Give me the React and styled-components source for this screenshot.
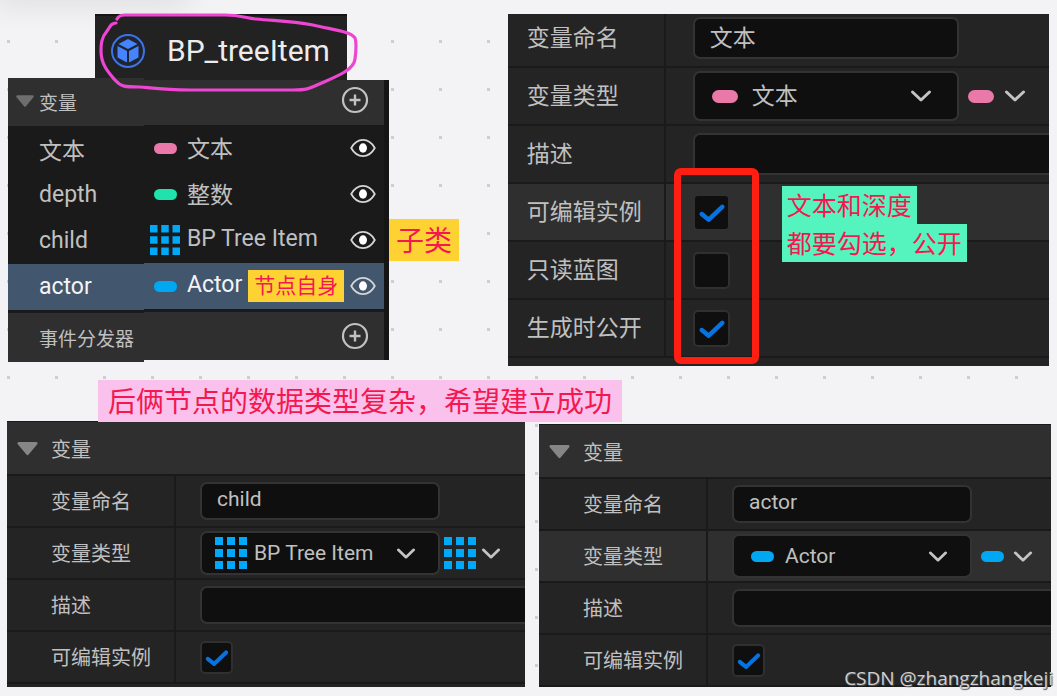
import React from "react";
import styled, { createGlobalStyle } from "styled-components";

const variables = [
  { name: "文本", type: "文本", color: "#e879a8" },
  { name: "depth", type: "整数", color: "#20e2ad" },
  { name: "child", type: "BP Tree Item", array: true },
  { name: "actor", type: "Actor", color: "#00a8f4", note: "节点自身", selected: true },
];

function Pin({ color, array, large }) {
  if (array) {
    const size = large ? 32 : 30;
    return (
      <svg width={size} height={size} viewBox="0 0 32 32" fill="#00a8f8">
        {[0, 12, 24].map((y) =>
          [0, 12, 24].map((x) => (
            <rect key={`${x}-${y}`} x={x} y={y} width="8" height="8" />
          ))
        )}
      </svg>
    );
  }
  return <Pill $color={color} $large={large} />;
}

function Chevron({ large }) {
  return (
    <svg width={large ? 22 : 20} height={large ? 14 : 13} viewBox="0 0 22 14" fill="none">
      <path
        d="M2.5 3 L11 11 L19.5 3"
        stroke="#c4c4c4"
        strokeWidth="3"
        strokeLinecap="round"
        strokeLinejoin="round"
      />
    </svg>
  );
}

function Triangle({ size, color }) {
  return (
    <svg width={size} height={size} viewBox="0 0 20 20">
      <path
        d="M2.5 5.5 H17.5 L10 14.5 Z"
        fill={color}
        stroke={color}
        strokeWidth="2.5"
        strokeLinejoin="round"
      />
    </svg>
  );
}

function Eye() {
  return (
    <svg width="26" height="20" viewBox="0 0 26 20" fill="none">
      <path
        d="M1.2 10 C4 5 8 1.9 13 1.9 C18 1.9 22 5 24.8 10 C22 15 18 18.1 13 18.1 C8 18.1 4 15 1.2 10 Z"
        stroke="#d6d6d6"
        strokeWidth="1.8"
        strokeLinejoin="round"
      />
      <ellipse cx="13" cy="10" rx="4" ry="4.7" fill="#fff" />
    </svg>
  );
}

function Plus() {
  return (
    <svg width="28" height="28" viewBox="0 0 28 28" fill="none" stroke="#c2c2c2">
      <circle cx="14" cy="14" r="12" strokeWidth="2.2" />
      <path d="M14 8.5 V19.5 M8.5 14 H19.5" strokeWidth="2.4" />
    </svg>
  );
}

function Cube() {
  return (
    <svg width="36" height="36" viewBox="0 0 36 36">
      <circle cx="18" cy="18" r="16" fill="#1f2430" stroke="#3c74e8" strokeWidth="2" />
      <path d="M18 6 L27.5 11 L18 16 L8.5 11 Z" fill="#4583ff" />
      <path d="M7.5 13 L17 18 V29.5 L7.5 24.5 Z" fill="#4583ff" />
      <path d="M28.5 13 L19 18 V29.5 L28.5 24.5 Z" fill="#4583ff" />
    </svg>
  );
}

function CheckBox({ id, checked, large }) {
  return (
    <Check $large={large}>
      <input id={id} type="checkbox" defaultChecked={checked} />
      <svg viewBox="0 0 36 36" fill="none">
        <path
          d="M8.5 19.5 L15.3 25 L28.5 12.5"
          stroke="#0673e2"
          strokeWidth="4.4"
          strokeLinecap="round"
          strokeLinejoin="round"
        />
      </svg>
    </Check>
  );
}

function Details({ id, large, name, type, pin, highlight, extra, tail, children }) {
  const checks = [["可编辑实例", true], ...(extra || [])];
  const size = { $large: large };
  return (
    <>
      <Row {...size} $first={large}>
        <Label {...size} htmlFor={`${id}-name`}>变量命名</Label>
        <Cell {...size}>
          <TextInput {...size} id={`${id}-name`} defaultValue={name} />
        </Cell>
      </Row>
      <Row {...size} $active={highlight === "type"}>
        <Label {...size} htmlFor={`${id}-type`}>变量类型</Label>
        <Cell {...size}>
          <SelectBox {...size} $array={pin.array}>
            <Pin {...pin} large={large || pin.array} />
            <select id={`${id}-type`} defaultValue={type}>
              <option>{type}</option>
            </select>
            <Chevron large={large} />
          </SelectBox>
          <KindButton {...size} $array={pin.array} aria-label="容器类型">
            <Pin {...pin} large={large || pin.array} />
            <Chevron large={large} />
          </KindButton>
        </Cell>
      </Row>
      <Row {...size}>
        <Label {...size} htmlFor={`${id}-desc`}>描述</Label>
        <Cell {...size}>
          <TextInput {...size} $wide id={`${id}-desc`} />
        </Cell>
      </Row>
      {checks.map(([label, on], i) => (
        <Row key={label} {...size} $active={highlight === "edit" && i === 0}>
          <Label {...size} htmlFor={`${id}-check-${i}`}>{label}</Label>
          <Cell {...size}>
            <CheckBox id={`${id}-check-${i}`} checked={on} large={large} />
          </Cell>
        </Row>
      ))}
      <Tail $height={tail} />
      {children}
    </>
  );
}

function App() {
  return (
    <Board>
      <GlobalStyle />
      <TopRow>
        <Blueprint>
          <Tab>
            <Cube />
            <span>BP_treeItem</span>
            <Lasso viewBox="0 0 270 90" fill="none">
              <path
                d="M20 10 C15 10 14 14 11 18 C5 25 5 32 5 38 C5 52 13 60 19 67 C25 74 29 74 44 74 C65 76 72 77 95 77 L197 77 C213 77 214 75 228 69 C244 62 258 56 259 46 C260 38 261 30 259 25 C254 18 238 17 217 12 C195 8 181 8 160 6 C149 5 145 2 129 2 L29 2 C24 2 22 4 21 6"
                stroke="#ee45d2"
                strokeWidth="3.2"
                strokeLinecap="round"
              />
            </Lasso>
          </Tab>
          <Variables>
            <Names>
              <NamesHeader>
                <Triangle size={20} color="#6e6e6e" />
                <span>变量</span>
              </NamesHeader>
              {variables.map((v) => (
                <NameRow key={v.name} $selected={v.selected}>{v.name}</NameRow>
              ))}
              <NamesFooter>事件分发器</NamesFooter>
            </Names>
            <Types>
              <TypesBar>
                <IconButton aria-label="添加变量"><Plus /></IconButton>
              </TypesBar>
              {variables.map((v) => (
                <TypeRow key={v.name} $selected={v.selected}>
                  <PinSlot><Pin color={v.color} array={v.array} /></PinSlot>
                  <TypeName>{v.type}</TypeName>
                  {v.note && <SelfNote>{v.note}</SelfNote>}
                  <IconButton aria-label="公开"><Eye /></IconButton>
                </TypeRow>
              ))}
              <TypesBar $footer>
                <IconButton aria-label="添加事件分发器"><Plus /></IconButton>
              </TypesBar>
            </Types>
            <ChildNote>子类</ChildNote>
          </Variables>
        </Blueprint>
        <TextPanel>
          <Details
            id="text"
            large
            name="文本"
            type="文本"
            pin={{ color: "#e879a8" }}
            highlight="edit"
            extra={[["只读蓝图", false], ["生成时公开", true]]}
            tail={10}
          >
            <RedFrame />
            <GreenNote>
              <span>文本和深度</span>
              <span>都要勾选，公开</span>
            </GreenNote>
          </Details>
        </TextPanel>
      </TopRow>
      <PinkNote>后俩节点的数据类型复杂，希望建立成功</PinkNote>
      <BottomRow>
        <Panel $grow={518}>
          <PanelHeader><Triangle size={23} color="#868686" />变量</PanelHeader>
          <Details
            id="child"
            name="child"
            type="BP Tree Item"
            pin={{ array: true }}
            tail={5}
          />
        </Panel>
        <Panel $grow={512}>
          <PanelHeader><Triangle size={23} color="#868686" />变量</PanelHeader>
          <Details
            id="actor"
            name="actor"
            type="Actor"
            pin={{ color: "#00a8f4" }}
            highlight="type"
            tail={2}
          />
        </Panel>
      </BottomRow>
      <Watermark>CSDN @zhangzhangkeji</Watermark>
    </Board>
  );
}

export default App;

const GlobalStyle = createGlobalStyle`
  * {
    box-sizing: border-box;
  }
  body {
    margin: 0;
  }
  body, input, select, button {
    font-family: Roboto, "Noto Sans CJK SC", sans-serif;
  }
  svg {
    display: block;
    flex: none;
  }
  button {
    display: flex;
    align-items: center;
    padding: 0;
    border: none;
    background: none;
    cursor: pointer;
  }
`;

const Board = styled.main`
  position: relative;
  overflow: hidden;
  min-height: 100vh;
  padding: 14px 6px 9px 7px;
  color: #c0c0c0;
  background-color: #f3f3f5;
  background-image: conic-gradient(from 270deg at 3px 3px, #cfcfd1 90deg, transparent 0);
  background-size: 48px 48px;
  background-position: 7px 40px;
  &::before {
    content: "";
    position: absolute;
    top: -12px;
    left: 0;
    width: 184px;
    height: 12px;
    box-shadow: 0 0 28px 6px rgb(0 0 0 / 9%);
  }
`;

const TopRow = styled.div`
  display: flex;
  align-items: flex-start;
  justify-content: space-between;
  padding: 0 2px 0 1px;
`;

const Blueprint = styled.section`
  width: 381px;
`;

const Tab = styled.div`
  position: relative;
  display: flex;
  align-items: center;
  width: 252px;
  height: 66px;
  margin: 0 0 -2px 87px;
  padding: 6px 0 0 15px;
  gap: 21px;
  background: #222;
  border-top: 2px solid #151515;
  color: #ececec;
  font-size: 30px;
  line-height: 36px;
`;

const Lasso = styled.svg`
  position: absolute;
  z-index: 2;
  top: -3px;
  left: 1px;
  width: 270px;
  height: 90px;
  pointer-events: none;
`;

const Variables = styled.div`
  position: relative;
  display: flex;
  align-items: flex-start;
  font-size: 23px;
`;

const Names = styled.div`
  width: 136px;
  background: #1a1a1a;
`;

const NamesHeader = styled.div`
  display: flex;
  align-items: center;
  gap: 4px;
  height: 48px;
  padding: 0 0 2px 7px;
  background: #2f2f2f;
  font-size: 19px;
`;

const NameRow = styled.div`
  display: flex;
  align-items: center;
  height: 46px;
  padding: 0 0 1px 31px;
  background: ${(p) => (p.$selected ? "#42566e" : "#1a1a1a")};
  color: ${(p) => (p.$selected ? "#f4f4f4" : "#c0c0c0")};
`;

const NamesFooter = styled.div`
  display: flex;
  align-items: center;
  height: 49px;
  margin-top: 3px;
  padding-left: 31px;
  background: #2f2f2f;
  font-size: 19px;
  white-space: nowrap;
`;

const Types = styled.div`
  flex: 1;
  margin-top: 2px;
  background: #1a1a1a;
  border-right: 5px solid #151515;
`;

const TypesBar = styled.div`
  display: flex;
  align-items: center;
  justify-content: flex-end;
  height: ${(p) => (p.$footer ? 48 : 45)}px;
  margin-top: ${(p) => (p.$footer ? 3 : 0)}px;
  padding: 0 15px ${(p) => (p.$footer ? 0 : 5)}px 0;
  background: #2f2f2f;
`;

const TypeRow = styled.div`
  display: flex;
  align-items: center;
  height: 46px;
  padding: 0 8px 0 6px;
  background: ${(p) => (p.$selected ? "#42566e" : "#1a1a1a")};
  color: ${(p) => (p.$selected ? "#f4f4f4" : "#c0c0c0")};
  white-space: nowrap;
  button {
    margin-left: auto;
  }
`;

const TypeName = styled.span`
  padding-bottom: 3px;
`;

const PinSlot = styled.span`
  display: flex;
  justify-content: center;
  width: 30px;
  margin-right: 7px;
`;

const Pill = styled.span`
  flex: none;
  width: ${(p) => (p.$large ? 26 : 23)}px;
  height: ${(p) => (p.$large ? 13 : 11)}px;
  border-radius: 7px;
  background: ${(p) => p.$color};
`;

const IconButton = styled.button`
  flex: none;
`;

const SelfNote = styled.span`
  height: 32px;
  margin-left: 6px;
  padding: 0 6px;
  background: #ffd233;
  color: #f5174f;
  font-size: 21px;
  line-height: 32px;
`;

const ChildNote = styled.div`
  position: absolute;
  left: 100%;
  top: 141px;
  width: 70px;
  height: 42px;
  background: #ffd233;
  color: #f5174f;
  font-size: 28px;
  line-height: 45px;
  text-align: center;
`;

const Panel = styled.section`
  flex: ${(p) => p.$grow} 1 0;
  min-width: 0;
  overflow: hidden;
  background: #242424;
  border-top: 1px solid #1a1a1a;
`;

const TextPanel = styled.section`
  position: relative;
  width: 52%;
  height: 352px;
  overflow: hidden;
  background: #242424;
`;

const PanelHeader = styled.header`
  display: flex;
  align-items: center;
  gap: 12px;
  height: 52px;
  padding-left: 9px;
  background: #2f2f2f;
  font-size: 20px;
`;

const Row = styled.div`
  display: flex;
  height: ${(p) => (p.$large ? 58 : 52)}px;
  margin-top: ${(p) => (p.$first ? -6 : 0)}px;
  border-top: 2px solid #1a1a1a;
  background: ${(p) => (p.$active ? "#2f2f2f" : "#242424")};
`;

const Label = styled.label`
  flex: none;
  display: flex;
  align-items: center;
  width: ${(p) => (p.$large ? 158 : 169)}px;
  padding-bottom: ${(p) => (p.$large ? 4 : 1)}px;
  padding-left: ${(p) => (p.$large ? 19 : 44)}px;
  border-right: 2px solid #1a1a1a;
  font-size: ${(p) => (p.$large ? 23 : 20)}px;
`;

const Cell = styled.div`
  flex: 1;
  display: flex;
  align-items: center;
  min-width: 0;
  padding-left: ${(p) => (p.$large ? 27 : 24)}px;
`;

const TextInput = styled.input`
  flex: none;
  width: ${(p) => (p.$wide ? "100%" : p.$large ? "266px" : "240px")};
  height: ${(p) => (p.$large ? 42 : 38)}px;
  padding: 0 15px 4px;
  border: 2px solid #333;
  border-right-width: ${(p) => (p.$wide ? 0 : 2)}px;
  border-radius: ${(p) => (p.$wide ? "7px 0 0 7px" : "7px")};
  background: #0f0f0f;
  color: #c0c0c0;
  font-size: ${(p) => (p.$large ? 23 : 21)}px;
  outline: none;
`;

const SelectBox = styled.div`
  flex: none;
  display: flex;
  align-items: center;
  gap: ${(p) => (p.$large ? 14 : p.$array ? 7 : 11)}px;
  width: ${(p) => (p.$large ? 266 : 240)}px;
  height: ${(p) => (p.$large ? 50 : 44)}px;
  padding: 0 ${(p) => (p.$large ? 25 : 22)}px 0 ${(p) => (p.$array ? 13 : 17)}px;
  border: 2px solid #333;
  border-radius: 7px;
  background: #0f0f0f;
  select {
    flex: 1;
    min-width: 0;
    padding: 0;
    border: none;
    appearance: none;
    background: none;
    color: #c0c0c0;
    font-size: ${(p) => (p.$large ? 23 : 21)}px;
    outline: none;
  }
`;

const KindButton = styled.button`
  gap: ${(p) => (p.$array ? 5 : p.$large ? 10 : 9)}px;
  margin-left: ${(p) => (p.$array ? 4 : 9)}px;
`;

const Check = styled.span`
  display: grid;
  width: ${(p) => (p.$large ? 37 : 33)}px;
  height: ${(p) => (p.$large ? 37 : 33)}px;
  input, svg {
    grid-area: 1 / 1;
    width: 100%;
    height: 100%;
    margin: 0;
  }
  input {
    appearance: none;
    border: 2px solid #303030;
    border-radius: 5px;
    background: #0f0f0f;
  }
  svg {
    visibility: hidden;
    pointer-events: none;
  }
  input:checked + svg {
    visibility: visible;
  }
`;

const Tail = styled.div`
  height: ${(p) => p.$height}px;
  border-top: 2px solid #1a1a1a;
`;

const RedFrame = styled.div`
  position: absolute;
  left: 166px;
  top: 154px;
  width: 85px;
  height: 196px;
  border: 7px solid #ff1e12;
  border-radius: 7px;
  pointer-events: none;
`;

const GreenNote = styled.div`
  position: absolute;
  left: 274px;
  top: 172px;
  display: flex;
  flex-direction: column;
  align-items: flex-start;
  color: #f5174f;
  font-size: 25px;
  line-height: 35px;
  span {
    padding: 3px 5px 0;
    background: #55f3bd;
  }
`;

const PinkNote = styled.p`
  position: relative;
  z-index: 1;
  width: fit-content;
  height: 42px;
  margin: 14px 0 -1px 91px;
  padding: 0 10px;
  background: #f9c1ec;
  color: #f5174f;
  font-size: 28px;
  line-height: 45px;
`;

const BottomRow = styled.div`
  display: flex;
  align-items: flex-end;
  gap: 14px;
`;

const Watermark = styled.div`
  position: absolute;
  right: 4px;
  bottom: 4px;
  color: #d0d0d0;
  font-family: "Open Sans", sans-serif;
  font-size: 19px;
  line-height: 28px;
  text-shadow: 1px 1px 1px #555;
`;
